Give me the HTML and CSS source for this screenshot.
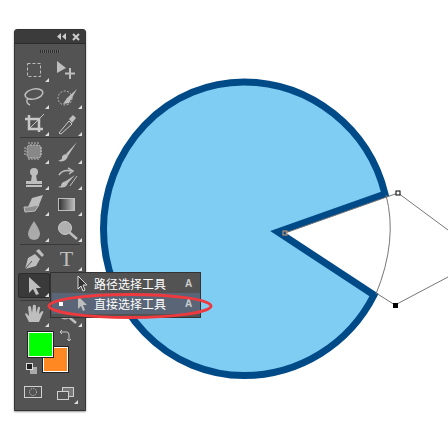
FILE: index.html
```html
<!DOCTYPE html>
<html lang="zh">
<head>
    <meta charset="UTF-8">
    <title>直接选择工具</title>
    <link rel="stylesheet" href="styles.css">
</head>
<body>
    <svg class="canvas" width="448" height="447" viewBox="0 0 448 447">
        <path d="M385 194 L278 232 L374 295 A146 147 0 0 1 244 375.500 A140.500 146.500 0 0 1 103.500 229 A140.500 147 0 0 1 244 82 A146 147 0 0 1 385 194 Z" fill="#7fcdf3" stroke="#004a88" stroke-width="7"/>
        <path d="M386 195 Q398 240 376 294" fill="none" stroke="#777" stroke-width="1"/>
        <path d="M285 233 L398 193 L448 230 M376 293 L395 305 L448 277" fill="none" stroke="#777" stroke-width="1"/>
        <rect x="283" y="231" width="4" height="4" fill="none" stroke="#e0a070"/>
        <rect x="396" y="191" width="4" height="4" fill="#fff" stroke="#000"/>
        <rect x="393" y="303" width="5" height="5" fill="#000"/>
    </svg>

    <div class="toolbar">
        <div class="titlebar">
            <svg width="24" height="8" viewBox="0 0 24 8"><path d="M4 0 V7 L0 3.500 Z M9 0 V7 L5 3.500 Z" fill="#ccc"/><path d="M16 1 L22 7 M22 1 L16 7" stroke="#ccc" stroke-width="2"/></svg>
        </div>
        <div class="grip"></div>

        <div class="tools tools-wide">
            <div class="tool more"><svg width="24" height="24" viewBox="0 0 24 24"><rect x="5.500" y="5.500" width="13" height="13" fill="none" stroke="#bebebe" stroke-dasharray="3 2"/></svg></div>
            <div class="tool"><svg width="24" height="24" viewBox="0 0 24 24"><path d="M2 3 L11 10 L2 15 Z" fill="#bebebe"/><path d="M15 10 V21 M10 15.500 H20" stroke="#bebebe" stroke-width="2"/></svg></div>
            <div class="tool more"><svg width="24" height="24" viewBox="0 0 24 24"><ellipse cx="12" cy="9" rx="9" ry="5" fill="none" stroke="#bebebe" stroke-width="1.500" transform="rotate(-12 12 9)"/><path d="M6 13 Q3 18 8 20" fill="none" stroke="#bebebe" stroke-width="1.500"/></svg></div>
            <div class="tool more"><svg width="24" height="24" viewBox="0 0 24 24"><circle cx="10" cy="13" r="7" fill="none" stroke="#bebebe" stroke-dasharray="2 1.500"/><path d="M22 4 L12 13 L8 19 L14 18 Z" fill="#bebebe"/></svg></div>
            <div class="tool more"><svg width="24" height="24" viewBox="0 0 24 24"><path d="M7 3 V17 H21 M3 7 H17 V20" fill="none" stroke="#c8c8c8" stroke-width="2.500"/><path d="M7 17 L17 7 L22 2" stroke="#c8c8c8"/></svg></div>
            <div class="tool more"><svg width="24" height="24" viewBox="0 0 24 24"><path d="M4 21 L14 9 L17 12 L6 22 Z" fill="none" stroke="#c8c8c8"/><path d="M14 7 L18 3 L21 6 L17 11 Z" fill="#bebebe"/></svg></div>
        </div>
        <div class="divider"></div>
        <div class="tools">
            <div class="tool more"><svg width="24" height="24" viewBox="0 0 24 24"><rect x="5" y="5" width="14" height="13" rx="3" fill="#888"/><path d="M7 2 V21 M10 2 V21 M13 2 V21 M16 2 V21 M2 8 H22 M2 11 H22 M2 14 H22" stroke="#bbb" stroke-dasharray="2 14"/><rect x="5" y="5" width="14" height="13" rx="3" fill="none" stroke="#bebebe" stroke-dasharray="2 1"/></svg></div>
            <div class="tool more"><svg width="24" height="24" viewBox="0 0 24 24"><path d="M22 2 L11 14 L13 16 Z" fill="#bebebe"/><path d="M11 14 Q6 15 7 19 L3 21 Q11 23 13 16 Z" fill="#bebebe"/></svg></div>
            <div class="tool more"><svg width="24" height="24" viewBox="0 0 24 24"><circle cx="12" cy="6" r="4" fill="#bebebe"/><path d="M10 9 H14 L15 15 H9 Z" fill="#bebebe"/><path d="M4 15 H20 V18 H4 Z" fill="#bebebe"/><path d="M4 20 H20" stroke="#bebebe" stroke-width="2"/></svg></div>
            <div class="tool more"><svg width="24" height="24" viewBox="0 0 24 24"><path d="M20 9 L11 15 L13 17 Z M11 15 Q6 16 6 20 L3 21 Q11 23 13 17 Z" fill="#bebebe"/><path d="M4 9 Q8 3 16 5 M13 2 L18 5 L14 8" fill="none" stroke="#bebebe" stroke-width="1.500"/><path d="M22 10 L15 20" stroke="#bebebe"/></svg></div>
            <div class="tool more"><svg width="24" height="24" viewBox="0 0 24 24"><path d="M10 6 L21 3 L17 13 L6 15 Z" fill="#bebebe"/><path d="M6 15 L2 15 L3 20 L13 19 L17 13 Z" fill="#8e8e8e" stroke="#bebebe"/></svg></div>
            <div class="tool more"><span class="gradient"></span></div>
            <div class="tool more"><svg width="24" height="24" viewBox="0 0 24 24"><path d="M12 3 Q6 12 6 16 A6 6 0 0 0 18 16 Q18 12 12 3 Z" fill="#aaa"/></svg></div>
            <div class="tool more"><svg width="24" height="24" viewBox="0 0 24 24"><circle cx="10" cy="10" r="6.500" fill="#b0b0b0" stroke="#c8c8c8"/><path d="M14 14 L22 21" stroke="#bebebe" stroke-width="2.500"/></svg></div>
        </div>
        <div class="divider"></div>
        <div class="tools tools-wide">
            <div class="tool more"><svg width="24" height="24" viewBox="0 0 24 24"><path d="M3 22 L6 11 L13 7 L18 12 L14 19 Z" fill="#bebebe"/><path d="M14 4 L17 2 L22 8 L20 10 Z" fill="#bebebe"/><path d="M3 22 L10 14" stroke="#555"/></svg></div>
            <div class="tool more"><span class="type">T</span></div>
            <div class="tool more active"><svg width="24" height="24" viewBox="0 0 24 24"><path d="M7 3 V19 L11 15 L14 21 L17 20 L14 14 L19 14 Z" fill="#bebebe"/></svg></div>
            <div class="tool"></div>
        </div>
        <div class="divider divider-tight"></div>
        <div class="tools tools-wide">
            <div class="tool more"><svg class="hand" width="24" height="24" viewBox="0 0 24 24"><path d="M7 21 L3 13 Q4 11 6 14 L7 15 L6 6 Q8 4 9 6 L10 12 L11 4 Q13 3 14 5 L14 12 L16 6 Q18 5 18 7 L17 13 L20 10 Q22 10 21 12 L17 21 Z" fill="#bebebe"/></svg></div>
            <div class="tool more"><svg width="24" height="24" viewBox="0 0 24 24"><circle cx="10" cy="10" r="6.500" fill="#b0b0b0"/><path d="M14 14 L21 20" stroke="#bebebe" stroke-width="2.500"/></svg></div>
        </div>

        <div class="colors">
            <span class="swatch bg-color"></span>
            <span class="swatch fg-color"></span>
            <svg class="swap" width="12" height="14" viewBox="0 0 12 14"><path d="M1 3 H8 Q10 3 10 6 V12 M8 10 L10 12 L12 10 M3 1 L1 3 L3 5" fill="none" stroke="#c8c8c8"/></svg>
            <svg class="reset" width="11" height="11" viewBox="0 0 11 11"><rect x="4" y="4" width="7" height="7" fill="#aaa"/><rect x="0.500" y="0.500" width="6" height="6" fill="#222" stroke="#ddd"/></svg>
        </div>

        <div class="modes">
            <svg width="18" height="14" viewBox="0 0 18 14"><rect x="0.500" y="0.500" width="17" height="11" fill="none" stroke="#d0d0d0"/><circle cx="9" cy="6" r="3.500" fill="none" stroke="#d0d0d0" stroke-dasharray="1 1"/></svg>
            <svg width="22" height="18" viewBox="0 0 22 18"><rect x="5.500" y="1.500" width="11" height="9" fill="#777" stroke="#d0d0d0"/><rect x="0.500" y="5.500" width="11" height="8" fill="#555" stroke="#d0d0d0"/><path d="M21 14 V18 H17 Z" fill="#ddd"/></svg>
        </div>
    </div>

    <div class="flyout">
        <div class="fly-row">
            <span class="dot"></span>
            <svg width="12" height="17" viewBox="0 0 12 17"><path d="M1 1 V14 L4 11 L6 16 L8 15 L6 10 L10 10 Z" fill="#333" stroke="#ddd"/></svg>
            <span class="fly-label">路径选择工具</span>
            <span class="fly-key">A</span>
        </div>
        <div class="fly-row selected">
            <span class="dot on"></span>
            <svg width="12" height="17" viewBox="0 0 12 17"><path d="M1 1 V14 L4 11 L6 16 L8 15 L6 10 L10 10 Z" fill="#bebebe"/></svg>
            <span class="fly-label">直接选择工具</span>
            <span class="fly-key">A</span>
        </div>
    </div>

    <svg class="mark" width="170" height="30" viewBox="0 0 170 30"><ellipse cx="85" cy="15" rx="81" ry="11.500" fill="none" stroke="#ee3a3f" stroke-width="3"/></svg>
</body>
</html>
```

FILE: styles.css
```css
html, body {
    margin: 0;
    padding: 0;
    background-color: #fff;
}
body {
    width: 448px;
    height: 447px;
    overflow: hidden;
    position: relative;
    font-family: "Liberation Sans", "Noto Sans CJK SC", sans-serif;
}
.canvas {
    position: absolute;
    left: 0;
    top: 0;
}
.toolbar {
    position: absolute;
    left: 14px;
    top: 29px;
    width: 70px;
    height: 380px;
    background-color: #535353;
    border: 1px solid #333;
    box-shadow: 0 1px 2px rgba(0, 0, 0, 0.4);
    border-radius: 3px 3px 0 0;
}
.titlebar {
    height: 13px;
    background-color: #3b3b3b;
    border-bottom: 1px solid #2a2a2a;
    display: flex;
    justify-content: flex-end;
    align-items: center;
    padding-right: 4px;
}
.grip {
    height: 3px;
    width: 20px;
    margin: 6px auto 0;
    background: repeating-linear-gradient(90deg, #2c2c2c 0, #2c2c2c 1px, #666 1px, #666 2px);
}
.tools {
    display: grid;
    grid-template-columns: 33px 33px;
    grid-auto-rows: 26px;
    justify-content: center;
}
.tools-wide {
    grid-auto-rows: 27px;
}
.grip + .tools {
    margin-top: 3px;
}
.tool {
    position: relative;
    display: flex;
    align-items: center;
    justify-content: center;
}
.tool.more::after {
    content: "";
    position: absolute;
    right: 1px;
    bottom: 1px;
    border-left: 4px solid transparent;
    border-bottom: 4px solid #ddd;
}
.tool.active {
    background-color: #3a3a3a;
    border-radius: 3px;
    box-shadow: inset 0 0 0 1px #2c2c2c;
    margin: 1px 0 1px 1px;
}
.hand {
    margin-bottom: 3px;
}
.divider {
    height: 1px;
    background-color: #3a3a3a;
    margin: 0 5px 1px;
}
.divider + .tools + .divider {
    margin-top: 1px;
    margin-bottom: 0;
}
.divider-tight {
    margin: 0 5px;
}
.gradient {
    width: 15px;
    height: 11px;
    border: 1px solid #bebebe;
    background: linear-gradient(90deg, #333, #bbb);
}
.type {
    font-family: "Liberation Serif", serif;
    font-size: 22px;
    line-height: 24px;
    color: #bebebe;
}
.colors {
    position: relative;
    height: 54px;
    margin-top: 4px;
}
.swatch {
    position: absolute;
    width: 23px;
    height: 23px;
    border: 1px solid #fff;
    outline: 1px solid #222;
}
.fg-color {
    left: 13px;
    top: 0;
    background-color: #00ff00;
}
.bg-color {
    left: 28px;
    top: 15px;
    background-color: #ff8822;
}
.swap {
    position: absolute;
    left: 44px;
    top: -3px;
}
.reset {
    position: absolute;
    left: 11px;
    top: 31px;
}
.modes {
    display: flex;
    justify-content: space-between;
    padding: 0 6px 0 9px;
}
.flyout {
    position: absolute;
    left: 50px;
    top: 272px;
    width: 149px;
    height: 44px;
    background-color: #535353;
    border: 1px solid #333;
}
.fly-row {
    height: 20px;
    display: flex;
    align-items: center;
    color: #fff;
    font-size: 12px;
    padding-left: 8px;
}
.fly-row.selected {
    height: 21px;
    margin-left: 1px;
    padding-left: 7px;
    background-color: #5a6678;
}
.dot {
    width: 4px;
    height: 4px;
    margin-right: 14px;
}
.dot.on {
    background-color: #fff;
}
.fly-label {
    margin-left: 5px;
    width: 91px;
}
.fly-key {
    font-size: 10px;
    font-weight: bold;
    color: #ccc;
}
.mark {
    position: absolute;
    left: 45px;
    top: 291px;
}
```
